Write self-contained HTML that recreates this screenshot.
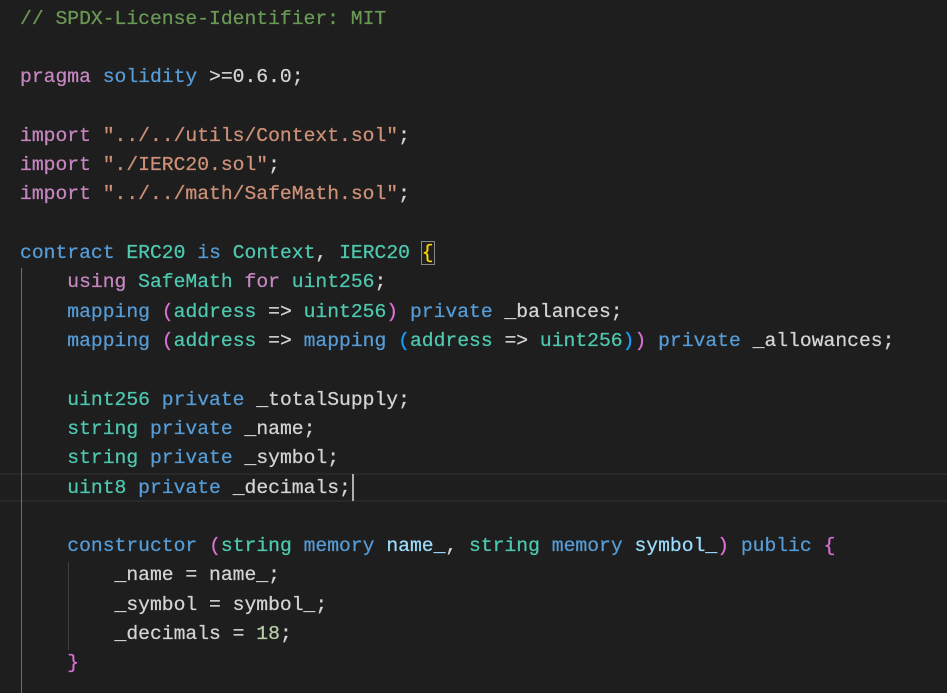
<!DOCTYPE html><html><head><style>
body{margin:0;background:#1e1e1e;width:947px;height:693px;overflow:hidden;position:relative}
pre{margin:0;position:absolute;left:20px;top:4.5px;font-family:"Liberation Mono",monospace;font-size:19.7px;line-height:29.32px;color:#d4d4d4;-webkit-text-stroke:0.25px}
.c{color:#6a9955}.k{color:#c586c0}.b{color:#569cd6}.t{color:#4ec9b0}.s{color:#ce9178}.n{color:#b5cea8}.v{color:#9cdcfe}.p1{color:#da70d6}.p2{color:#179fff}.g{color:#ffd700}
.cur{position:absolute;left:0;width:947px;top:473px;height:29px;border-top:2px solid #282828;border-bottom:2px solid #282828;box-sizing:border-box}
.guide{position:absolute;width:1px;background:#404040}
.bx{outline:1px solid #888;}
</style></head><body>
<div class="cur"></div>
<div class="guide" style="left:21px;top:268px;height:425px;background:#707070"></div>
<div class="guide" style="left:68px;top:562px;height:88px"></div>
<div style="position:absolute;left:352px;top:474px;width:2px;height:27px;background:#aeafad"></div>
<pre><span class="c">// SPDX-License-Identifier: MIT</span>

<span class="k">pragma</span> <span class="b">solidity</span> &gt;=0.6.0;

<span class="k">import</span> <span class="s">"../../utils/Context.sol"</span>;
<span class="k">import</span> <span class="s">"./IERC20.sol"</span>;
<span class="k">import</span> <span class="s">"../../math/SafeMath.sol"</span>;

<span class="b">contract</span> <span class="t">ERC20</span> <span class="b">is</span> <span class="t">Context</span>, <span class="t">IERC20</span> <span class="g bx">{</span>
    <span class="k">using</span> <span class="t">SafeMath</span> <span class="k">for</span> <span class="t">uint256</span>;
    <span class="b">mapping</span> <span class="p1">(</span><span class="t">address</span> =&gt; <span class="t">uint256</span><span class="p1">)</span> <span class="b">private</span> _balances;
    <span class="b">mapping</span> <span class="p1">(</span><span class="t">address</span> =&gt; <span class="b">mapping</span> <span class="p2">(</span><span class="t">address</span> =&gt; <span class="t">uint256</span><span class="p2">)</span><span class="p1">)</span> <span class="b">private</span> _allowances;

    <span class="t">uint256</span> <span class="b">private</span> _totalSupply;
    <span class="t">string</span> <span class="b">private</span> _name;
    <span class="t">string</span> <span class="b">private</span> _symbol;
    <span class="t">uint8</span> <span class="b">private</span> _decimals;

    <span class="b">constructor</span> <span class="p1">(</span><span class="t">string</span> <span class="b">memory</span> <span class="v">name_</span>, <span class="t">string</span> <span class="b">memory</span> <span class="v">symbol_</span><span class="p1">)</span> <span class="b">public</span> <span class="p1">{</span>
        _name = name_;
        _symbol = symbol_;
        _decimals = <span class="n">18</span>;
    <span class="p1">}</span></pre>
</body></html>
